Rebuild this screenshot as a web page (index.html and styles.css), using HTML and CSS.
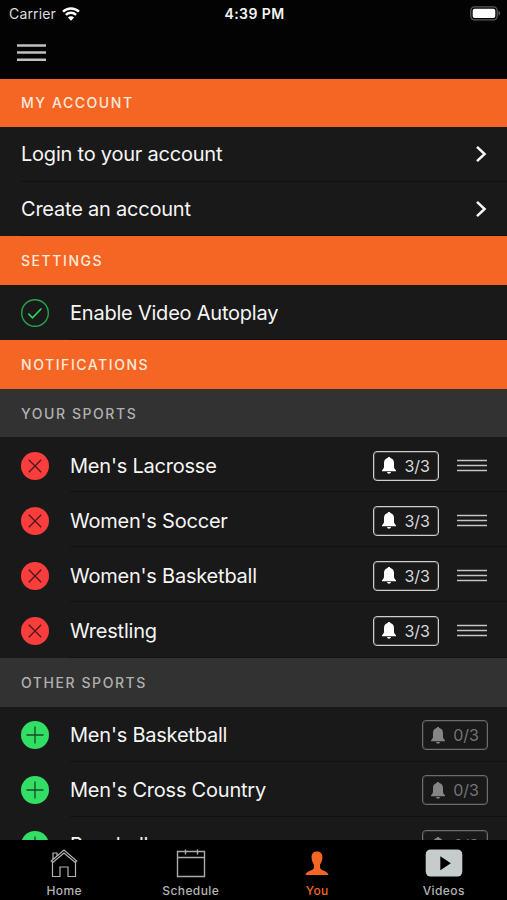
FILE: index.html
```
<!DOCTYPE html>
<html lang="en">
<head>
<meta charset="utf-8">
<title>You</title>
<link rel="stylesheet" href="styles.css">
</head>
<body>
<svg class="symbols" width="0" height="0" aria-hidden="true">
  <symbol id="chevron" viewBox="0 0 12 18"><path d="M2 1.800 9.600 9 2 16.200" fill="none" stroke="currentColor" stroke-width="2.500"/></symbol>
  <symbol id="remove" viewBox="0 0 28 28"><circle cx="14" cy="14" r="14" fill="#fb3d3e"/><path d="m7.800 7.800 12.400 12.400m0-12.400L7.800 20.200" stroke="#4b191a" stroke-width="1.300"/></symbol>
  <symbol id="add" viewBox="0 0 28 28"><circle cx="14" cy="14" r="14" fill="#32df64"/><path d="M14 5.500v17M5.500 14h17" stroke="#174b27" stroke-width="1.300"/></symbol>
  <symbol id="check" viewBox="0 0 28 28"><circle cx="14" cy="14" r="13.300" fill="none" stroke="#25a64c" stroke-width="1.400"/><path d="m7.400 14.600 4.100 4.200 8.900-9.300" fill="none" stroke="#2fd45e" stroke-width="1.600"/></symbol>
  <symbol id="bell" viewBox="0 0 14 17"><path d="M7 0c.8 0 1.300.5 1.400 1.100C10.800 1.700 12 3.600 12 6v3.600c0 1.700.8 2.700 2 3.700v.9H0v-.9c1.200-1 2-2 2-3.700V6c0-2.400 1.200-4.300 3.600-4.900C5.700.5 6.200 0 7 0ZM5.100 15h3.800c-.1 1.100-.8 1.700-1.900 1.700S5.200 16.100 5.100 15Z" fill="currentColor"/></symbol>
  <symbol id="grip" viewBox="0 0 30 13"><path d="M0 1.500h30M0 6.500h30M0 11.500h30" stroke="#c4c4c4" stroke-width="1.700"/></symbol>
</svg>
<div class="screen">
  <header class="header">
    <div class="status">
      <div class="carrier">Carrier
        <svg width="18" height="14" viewBox="0 0 18 14"><path d="M1 4.700a11.500 11.500 0 0 1 16 0M3.900 7.800a7.300 7.300 0 0 1 10.200 0" fill="none" stroke="#fff" stroke-width="2.400"/><path d="M9 13.700 5.900 10.500a4.400 4.400 0 0 1 6.200 0Z" fill="#fff"/></svg>
      </div>
      <div class="time">4:39 PM</div>
      <svg class="battery" width="31" height="15" viewBox="0 0 31 15"><rect x=".8" y=".8" width="26.400" height="13" rx="3.800" fill="none" stroke="#5c5c5e" stroke-width="1.300"/><rect x="2.700" y="2.700" width="22.600" height="9.200" rx="2" fill="#fff"/><path d="M28.500 5c2.200.6 2.200 4 0 4.600Z" fill="#5c5c5e"/></svg>
    </div>
    <svg class="menu" width="29" height="19" viewBox="0 0 29 19"><path d="M0 2.500h29M0 9.500h29M0 16.700h29" stroke="#c0c0c0" stroke-width="2.400"/></svg>
  </header>
  <main class="content">
    <h2 class="band account">MY ACCOUNT</h2>
    <div class="row link"><span class="label login">Login to your account</span><svg class="chevron"><use href="#chevron"/></svg></div>
    <div class="row link"><span class="label create">Create an account</span><svg class="chevron"><use href="#chevron"/></svg></div>
    <h2 class="band">SETTINGS</h2>
    <div class="row setting"><svg class="mark"><use href="#check"/></svg><span class="label">Enable Video Autoplay</span></div>
    <h2 class="band">NOTIFICATIONS</h2>
    <h3 class="band sub">YOUR SPORTS</h3>
    <div class="row sport"><svg class="mark"><use href="#remove"/></svg><span class="label">Men's Lacrosse</span><span class="badge"><svg class="bell"><use href="#bell"/></svg>3/3</span><svg class="grip"><use href="#grip"/></svg></div>
    <div class="row sport"><svg class="mark"><use href="#remove"/></svg><span class="label">Women's Soccer</span><span class="badge"><svg class="bell"><use href="#bell"/></svg>3/3</span><svg class="grip"><use href="#grip"/></svg></div>
    <div class="row sport"><svg class="mark"><use href="#remove"/></svg><span class="label">Women's Basketball</span><span class="badge"><svg class="bell"><use href="#bell"/></svg>3/3</span><svg class="grip"><use href="#grip"/></svg></div>
    <div class="row sport last"><svg class="mark"><use href="#remove"/></svg><span class="label">Wrestling</span><span class="badge"><svg class="bell"><use href="#bell"/></svg>3/3</span><svg class="grip"><use href="#grip"/></svg></div>
    <h3 class="band sub">OTHER SPORTS</h3>
    <div class="row sport"><svg class="mark"><use href="#add"/></svg><span class="label">Men's Basketball</span><span class="badge off"><svg class="bell"><use href="#bell"/></svg>0/3</span></div>
    <div class="row sport"><svg class="mark"><use href="#add"/></svg><span class="label">Men's Cross Country</span><span class="badge off"><svg class="bell"><use href="#bell"/></svg>0/3</span></div>
    <div class="row sport"><svg class="mark"><use href="#add"/></svg><span class="label">Baseball</span><span class="badge off"><svg class="bell"><use href="#bell"/></svg>0/3</span></div>
  </main>
  <nav class="tabs">
    <div class="tab"><svg width="28" height="30" viewBox="0 0 28 30"><path d="M2.500 14.500V28.500H10V19h8v9.500h7.500v-14M1.300 13 14 2l12.700 11-1.500 1.500L14 5 2.800 14.500ZM3 11V5h4v3" fill="none" stroke="#b4b4b4" stroke-width="1.200"/></svg>Home</div>
    <div class="tab"><svg width="30" height="30" viewBox="0 0 30 30"><path d="M1.500 3.500h27v25h-27ZM1.500 9.500h27M9.500 1.500v5M21.500 1.500v5" fill="none" stroke="#aaa" stroke-width="1.400"/></svg>Schedule</div>
    <div class="tab active"><svg width="24" height="30" viewBox="0 0 24 30"><path d="M12 3.500c3.900 0 5.600 2.600 5.400 6.300-.2 2.900-1 5-2.300 6.600v3.300c.2 3.200 7.600 2.600 8.400 7.300H.5c.8-4.700 8.200-4.100 8.400-7.300v-3.300C7.600 14.800 6.800 12.700 6.600 9.800 6.400 6.100 8.100 3.500 12 3.500Z" fill="currentColor"/></svg>You</div>
    <div class="tab"><svg width="38" height="30" viewBox="0 0 38 30"><rect x=".7" y="1.400" width="36.600" height="27.200" rx="5" fill="#c6cbcc"/><path d="m15.300 8.200 10.500 7-10.500 7Z" fill="#000"/></svg>Videos</div>
  </nav>
</div>
</body>
</html>
```

FILE: styles.css
```
* { box-sizing: border-box; }
body { margin: 0; background: #000; font-family: Inter, "Liberation Sans", sans-serif; color: #f5f5f5; }
svg { display: block; flex: none; }
.symbols { position: absolute; }
.screen { width: 507px; height: 900px; display: flex; flex-direction: column; overflow: hidden; background: #030303; }
.header { height: 79px; flex: none; }
.status { height: 27px; padding: 0 7px 0 9px; display: grid; grid-template-columns: 1fr auto 1fr; align-items: center; }
.carrier { display: flex; align-items: center; gap: 6px; font-size: 14px; letter-spacing: .15px; color: #dedede; }
.time { font-size: 14px; font-weight: 600; letter-spacing: .4px; }
.battery { justify-self: end; margin-right: -1px; }
.menu { margin: 16px 0 0 17px; }
.content { flex: 1; min-height: 0; overflow: hidden; background: #191919; }
.band { height: 48.500px; margin: 0; padding: 0 21px; display: flex; align-items: center; background: #f56624; color: #ffe9dc; font-size: 14px; font-weight: 500; letter-spacing: 1.560px; }
.band.account { height: 48px; padding-bottom: 1px; }
.band.sub { background: #323232; color: #b0b0b0; padding-top: 1px; }
.row { height: 55px; padding: 0 19px 0 21px; display: flex; align-items: center; background: linear-gradient(#111, #111) 70px 100% / 100% 1px no-repeat; }
.row.link { height: 54.500px; padding-right: 20px; background-position: 21px 100%; }
.row.setting { height: 55.500px; padding-top: 1px; }
.row.sport { padding-top: 2px; }
.row.last { height: 56px; padding-top: 1px; }
.mark { width: 28px; height: 28px; margin-right: 21px; }
.label { flex: 1; font-size: 20px; line-height: 26px; letter-spacing: -.22px; white-space: nowrap; }
.chevron { width: 12px; height: 18px; }
.badge { width: 66px; height: 30px; padding: 0 8px; border: 1px solid #cfcfcf; outline: 1px solid #cfcfcf40; outline-offset: -2px; border-radius: 4px; display: flex; align-items: center; justify-content: space-between; font-size: 16px; color: #d8d8d8; }
.bell { width: 14px; height: 17px; color: #fff; }
.badge.off { color: #747474; border-color: #6d6d6d; outline-color: #6d6d6d40; }
.off .bell { color: #858585; }
.grip { width: 30px; height: 13px; margin: 0 1px 0 18px; }
.tabs { height: 60px; flex: none; padding: 8px 0 0 1px; display: grid; grid-template-columns: repeat(4, 1fr); background: #000; }
.tab { display: flex; flex-direction: column; align-items: center; gap: 5px; font-size: 12px; line-height: 15px; font-weight: 500; letter-spacing: .4px; color: #b4b4b4; }
.tab.active { color: #f56624; }
```
